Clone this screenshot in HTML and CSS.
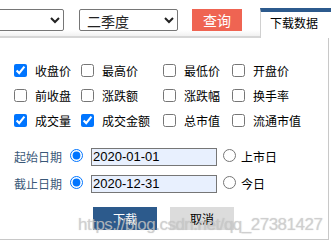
FILE: index.html
```html
<!DOCTYPE html>
<html lang="zh">
<head>
<meta charset="utf-8">
<link rel="stylesheet" href="styles.css">
</head>
<body>
<div class="top">
  <select class="sel sel1"><option></option></select>
  <select class="sel sel2"><option>二季度</option></select>
  <button class="query">查询</button>
  <div class="tab">下载数据</div>
</div>
<div class="panel">
  <div class="checks">
    <label class="ck"><input type="checkbox" checked><span>收盘价</span></label>
    <label class="ck"><input type="checkbox"><span>最高价</span></label>
    <label class="ck"><input type="checkbox"><span>最低价</span></label>
    <label class="ck"><input type="checkbox"><span>开盘价</span></label>
    <label class="ck"><input type="checkbox"><span>前收盘</span></label>
    <label class="ck"><input type="checkbox"><span>涨跌额</span></label>
    <label class="ck"><input type="checkbox"><span>涨跌幅</span></label>
    <label class="ck"><input type="checkbox"><span>换手率</span></label>
    <label class="ck"><input type="checkbox" checked><span>成交量</span></label>
    <label class="ck"><input type="checkbox" checked><span>成交金额</span></label>
    <label class="ck"><input type="checkbox"><span>总市值</span></label>
    <label class="ck"><input type="checkbox"><span>流通市值</span></label>
  </div>
  <div class="dates">
    <div class="drow">
      <span class="dlabel">起始日期</span>
      <input class="rd" type="radio" name="s" checked>
      <input class="dinput" type="text" value="2020-01-01">
      <input class="rd rd2" type="radio" name="s">
      <span class="dopt">上市日</span>
    </div>
    <div class="drow">
      <span class="dlabel">截止日期</span>
      <input class="rd" type="radio" name="e" checked>
      <input class="dinput" type="text" value="2020-12-31">
      <input class="rd rd2" type="radio" name="e">
      <span class="dopt">今日</span>
    </div>
  </div>
  <div class="actions">
    <button class="btn btn-ok">下载</button>
    <button class="btn btn-cancel">取消</button>
  </div>
  <div class="watermark">https://blog.csdn.net/qq_27381427</div>
</div>
</body>
</html>
```
FILE: styles.css
```css
* { box-sizing: border-box; }
html, body {
  margin: 0;
  padding: 0;
  background: #fff;
  width: 331px;
  height: 245px;
  overflow: hidden;
  font-family: "Noto Sans CJK SC", "Liberation Sans", sans-serif;
  font-size: 12px;
  color: #000;
}
.top {
  display: flex;
  align-items: flex-start;
  height: 38px;
  padding-top: 9px;
  border-bottom: 2px solid #d6d6d6;
  background: linear-gradient(#fff 0, #fff 30px, #f1f1f1 36px);
}
.sel {
  height: 22px;
  font-family: "Noto Sans CJK SC", sans-serif;
  font-size: 14px;
  border: 1px solid #767676;
  border-radius: 2px;
  background: #fff;
  color: #222;
  padding: 0 0 0 3px;
  margin: 0;
}
.sel1 { width: 80px; margin-left: -16px; }
.sel2 { width: 99px; margin-left: 15px; }
.query {
  margin: 0 0 0 14px;
  width: 50px;
  height: 22px;
  border: none;
  background: #ef6452;
  color: #fff;
  font-family: "Noto Sans CJK SC", sans-serif;
  font-size: 14px;
  padding: 0;
  line-height: 22px;
}
.tab {
  margin-left: 18px;
  margin-top: -1px;
  width: 71px;
  height: 30px;
  background: #fff;
  border-top: 4px solid #2c5a8d;
  border-left: 1px solid #d0d0d0;
  padding: 3px 0 0 9px;
  line-height: 16px;
  font-size: 12px;
  position: relative;
}
.panel {
  position: relative;
  width: 329px;
  height: 202px;
  border-right: 1px solid #c8c8c8;
  border-bottom: 1px solid #c8c8c8;
  padding-top: 20px;
}
.checks {
  display: grid;
  grid-template-columns: 67px 82px 69px auto;
  grid-auto-rows: 25px;
  padding-left: 14px;
}
.ck {
  display: flex;
  align-items: center;
  gap: 8px;
}
.ck input {
  margin: 0;
  width: 13px;
  height: 13px;
}
.dates {
  margin-top: 10px;
}
.drow {
  display: flex;
  align-items: center;
  height: 27px;
  padding-left: 14px;
}
.dlabel {
  width: 48px;
  color: #3a5878;
}
.rd {
  margin: 0 0 3px 8px;
  width: 13px;
  height: 13px;
}
.rd2 { margin-left: 6px; }
.dinput {
  margin-left: 8px;
  width: 126px;
  height: 18px;
  border: 1px solid #767676;
  background: #e8f0fe;
  font-family: "Liberation Sans", sans-serif;
  font-size: 13px;
  padding: 0 1px;
  color: #000;
}
.dopt {
  margin-left: 5px;
}
.actions {
  display: flex;
  gap: 13px;
  margin-top: 10px;
  padding-left: 93px;
}
.btn {
  width: 64px;
  height: 23px;
  border: none;
  margin: 0;
  padding: 0;
  font-family: "Noto Sans CJK SC", sans-serif;
  font-size: 12px;
}
.btn-ok { background: #2c5a8c; color: #fff; }
.btn-cancel { background: #dcdcdc; color: #000; }
.watermark {
  position: absolute;
  left: 78px;
  top: 177px;
  font-family: "Liberation Sans", sans-serif;
  font-size: 17px;
  line-height: 20px;
  letter-spacing: -0.5px;
  color: rgba(205, 205, 205, 0.75);
  text-shadow: 0 0 1px rgba(120, 120, 120, 0.35);
  white-space: nowrap;
  pointer-events: none;
}
```
